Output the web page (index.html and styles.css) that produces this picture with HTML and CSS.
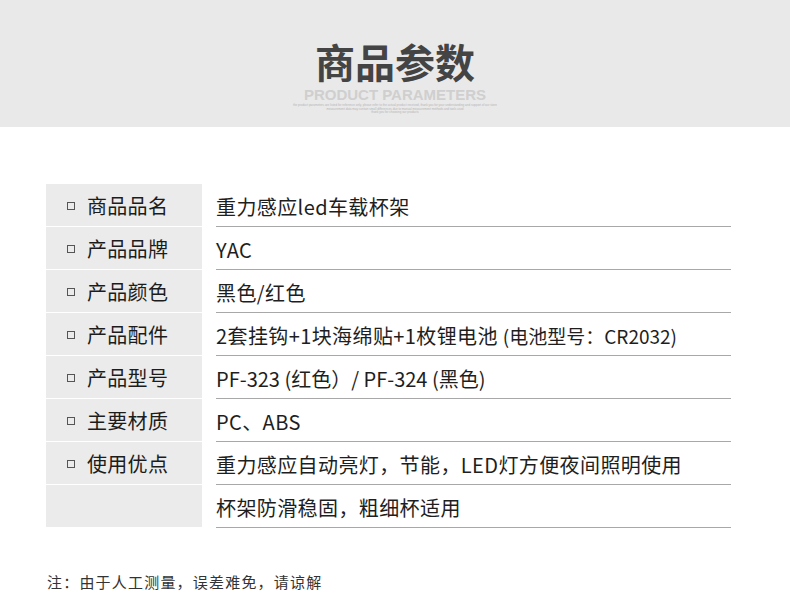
FILE: index.html
```html
<!DOCTYPE html>
<html lang="zh">
<head>
<meta charset="utf-8">
<link rel="stylesheet" href="styles.css">
</head>
<body>
<header class="banner">
  <h1 class="title">商品参数</h1>
  <div class="subtitle">PRODUCT PARAMETERS</div>
  <div class="fine">
    <p class="fine-1">the product parameters are listed for reference only, please refer to the actual product received, thank you for your understanding and support of our store</p>
    <p class="fine-2">measurement data may contain small differences due to manual measurement methods and tools used</p>
    <p class="fine-3">thank you for choosing our products</p>
  </div>
</header>

<main class="specs">
  <div class="row"><div class="label"><span class="box"></span>商品品名</div><div class="value">重力感应led车载杯架</div></div>
  <div class="row"><div class="label"><span class="box"></span>产品品牌</div><div class="value">YAC</div></div>
  <div class="row"><div class="label"><span class="box"></span>产品颜色</div><div class="value">黑色/红色</div></div>
  <div class="row"><div class="label"><span class="box"></span>产品配件</div><div class="value">2套挂钩+1块海绵贴+1枚锂电池 <span class="small">(电池型号：CR2032)</span></div></div>
  <div class="row"><div class="label"><span class="box"></span>产品型号</div><div class="value tight">PF-323 (红色）/ PF-324 (黑色)</div></div>
  <div class="row"><div class="label"><span class="box"></span>主要材质</div><div class="value">PC、ABS</div></div>
  <div class="row"><div class="label"><span class="box"></span>使用优点</div><div class="value">重力感应自动亮灯，节能，LED灯方便夜间照明使用</div></div>
  <div class="row"><div class="label"></div><div class="value">杯架防滑稳固，粗细杯适用</div></div>
</main>

<p class="note">注：由于人工测量，误差难免，请谅解</p>
</body>
</html>
```

FILE: styles.css
```css
html, body {
  margin: 0;
  padding: 0;
  background: #ffffff;
  font-family: "Noto Sans CJK SC", "Noto Sans", sans-serif;
  color: #222;
}

.banner {
  height: 127px;
  background: #e9e9e9;
  display: flex;
  flex-direction: column;
  align-items: center;
  box-sizing: border-box;
  padding-top: 40px;
}

.title {
  margin: 0;
  font-size: 40px;
  line-height: 42px;
  font-weight: 700;
  color: #444;
}

.subtitle {
  font-family: "Liberation Sans", Arial, sans-serif;
  font-weight: 700;
  font-size: 15px;
  line-height: 16px;
  color: #cfcfcf;
  margin-top: 5px;
}

.fine {
  display: flex;
  flex-direction: column;
  align-items: center;
  margin-top: 1px;
}

.fine p {
  margin: 0;
  font-family: "Liberation Sans", Arial, sans-serif;
  font-size: 3px;
  line-height: 3.5px;
  color: #b5b5b5;
  white-space: nowrap;
}

.specs {
  display: flex;
  flex-direction: column;
  gap: 1px;
  margin: 57px 0 0 46px;
  width: 685px;
}

.row {
  display: flex;
  height: 42px;
  gap: 14px;
}

.label {
  width: 156px;
  flex: none;
  background: #ebebeb;
  display: flex;
  align-items: center;
  box-sizing: border-box;
  padding-left: 21px;
  padding-top: 1px;
  font-size: 20px;
  color: #1c1c1c;
  letter-spacing: 0.3px;
}

.box {
  width: 6px;
  height: 6px;
  border: 1px solid #555;
  margin-right: 12px;
  flex: none;
}

.value {
  flex: 1;
  display: flex;
  align-items: center;
  border-bottom: 1px solid #a8a8a8;
  margin-bottom: -1px;
  padding-top: 3px;
  font-size: 20px;
  color: #1e1e1e;
  letter-spacing: 0.4px;
  white-space: pre;
}

.tight {
  letter-spacing: 0;
}

.small {
  font-size: 19px;
  letter-spacing: 0;
}

.note {
  margin: 44px 0 0 47px;
  font-size: 15px;
  letter-spacing: 1.2px;
  color: #333;
}
```
